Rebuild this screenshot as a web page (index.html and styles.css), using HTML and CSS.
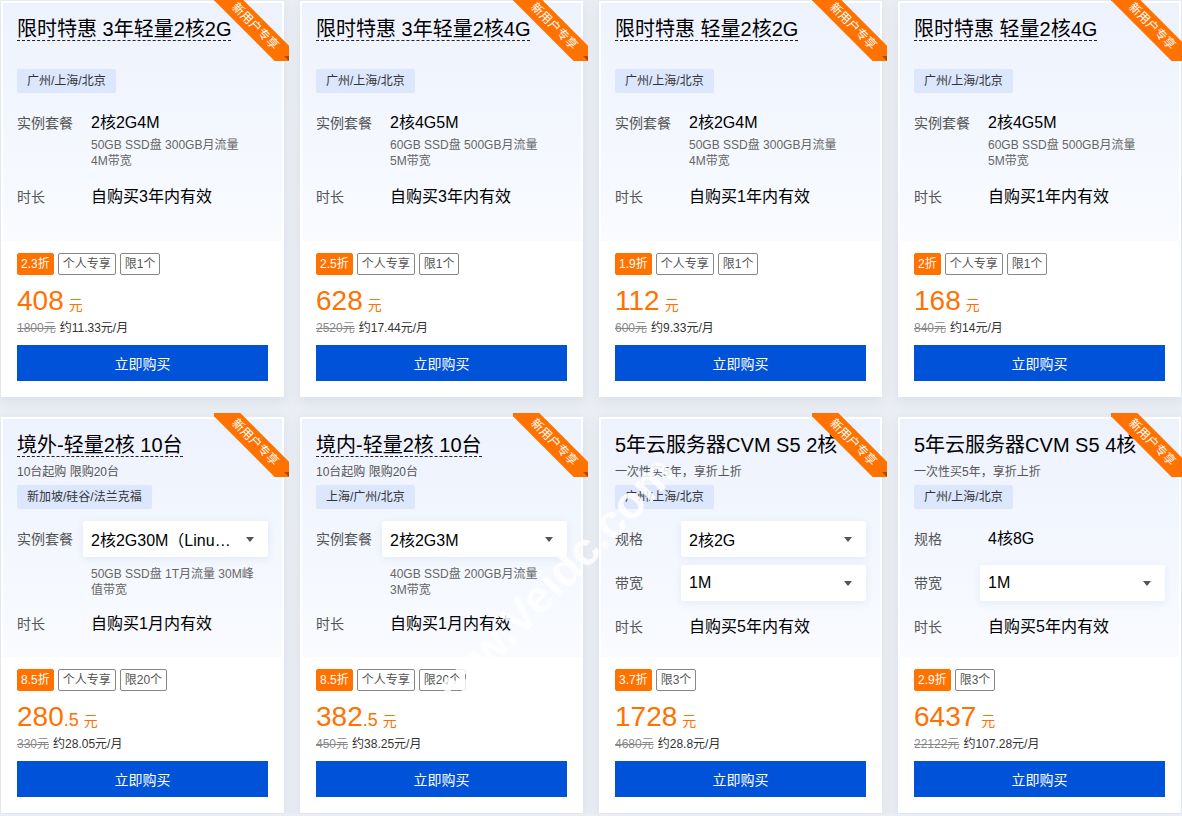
FILE: index.html
```html
<!DOCTYPE html>
<html lang="zh-CN">
<head>
    <meta charset="UTF-8">
    <meta name="viewport" content="width=device-width, initial-scale=1.0">
    <title>新用户专享</title>
    <link rel="stylesheet" href="styles.css">
</head>
<body>
    <div class="plans">

        <div class="plan">
            <div class="ribbon"><span>新用户专享</span></div>
            <div class="plan-top">
                <div class="plan-head">
                    <div class="plan-title"><span class="dashed">限时特惠 3年轻量2核2G</span></div>
                </div>
                <div class="region">广州/上海/北京</div>
                <div class="specs">
                    <div class="spec">
                        <span class="spec-label">实例套餐</span>
                        <div class="spec-value">
                            <div class="spec-text">2核2G4M</div>
                            <div class="spec-note">50GB SSD盘 300GB月流量 4M带宽</div>
                        </div>
                    </div>
                    <div class="spec">
                        <span class="spec-label">时长</span>
                        <div class="spec-value"><div class="spec-text">自购买3年内有效</div></div>
                    </div>
                </div>
            </div>
            <div class="plan-bottom">
                <div class="tags">
                    <span class="tag tag-off">2.3折</span>
                    <span class="tag">个人专享</span>
                    <span class="tag">限1个</span>
                </div>
                <div class="price">408<span class="price-unit">元</span></div>
                <div class="orig"><del>1800元</del>约11.33元/月</div>
                <button class="buy">立即购买</button>
            </div>
        </div>

        <div class="plan">
            <div class="ribbon"><span>新用户专享</span></div>
            <div class="plan-top">
                <div class="plan-head">
                    <div class="plan-title"><span class="dashed">限时特惠 3年轻量2核4G</span></div>
                </div>
                <div class="region">广州/上海/北京</div>
                <div class="specs">
                    <div class="spec">
                        <span class="spec-label">实例套餐</span>
                        <div class="spec-value">
                            <div class="spec-text">2核4G5M</div>
                            <div class="spec-note">60GB SSD盘 500GB月流量 5M带宽</div>
                        </div>
                    </div>
                    <div class="spec">
                        <span class="spec-label">时长</span>
                        <div class="spec-value"><div class="spec-text">自购买3年内有效</div></div>
                    </div>
                </div>
            </div>
            <div class="plan-bottom">
                <div class="tags">
                    <span class="tag tag-off">2.5折</span>
                    <span class="tag">个人专享</span>
                    <span class="tag">限1个</span>
                </div>
                <div class="price">628<span class="price-unit">元</span></div>
                <div class="orig"><del>2520元</del>约17.44元/月</div>
                <button class="buy">立即购买</button>
            </div>
        </div>

        <div class="plan">
            <div class="ribbon"><span>新用户专享</span></div>
            <div class="plan-top">
                <div class="plan-head">
                    <div class="plan-title"><span class="dashed">限时特惠 轻量2核2G</span></div>
                </div>
                <div class="region">广州/上海/北京</div>
                <div class="specs">
                    <div class="spec">
                        <span class="spec-label">实例套餐</span>
                        <div class="spec-value">
                            <div class="spec-text">2核2G4M</div>
                            <div class="spec-note">50GB SSD盘 300GB月流量 4M带宽</div>
                        </div>
                    </div>
                    <div class="spec">
                        <span class="spec-label">时长</span>
                        <div class="spec-value"><div class="spec-text">自购买1年内有效</div></div>
                    </div>
                </div>
            </div>
            <div class="plan-bottom">
                <div class="tags">
                    <span class="tag tag-off">1.9折</span>
                    <span class="tag">个人专享</span>
                    <span class="tag">限1个</span>
                </div>
                <div class="price">112<span class="price-unit">元</span></div>
                <div class="orig"><del>600元</del>约9.33元/月</div>
                <button class="buy">立即购买</button>
            </div>
        </div>

        <div class="plan">
            <div class="ribbon"><span>新用户专享</span></div>
            <div class="plan-top">
                <div class="plan-head">
                    <div class="plan-title"><span class="dashed">限时特惠 轻量2核4G</span></div>
                </div>
                <div class="region">广州/上海/北京</div>
                <div class="specs">
                    <div class="spec">
                        <span class="spec-label">实例套餐</span>
                        <div class="spec-value">
                            <div class="spec-text">2核4G5M</div>
                            <div class="spec-note">60GB SSD盘 500GB月流量 5M带宽</div>
                        </div>
                    </div>
                    <div class="spec">
                        <span class="spec-label">时长</span>
                        <div class="spec-value"><div class="spec-text">自购买1年内有效</div></div>
                    </div>
                </div>
            </div>
            <div class="plan-bottom">
                <div class="tags">
                    <span class="tag tag-off">2折</span>
                    <span class="tag">个人专享</span>
                    <span class="tag">限1个</span>
                </div>
                <div class="price">168<span class="price-unit">元</span></div>
                <div class="orig"><del>840元</del>约14元/月</div>
                <button class="buy">立即购买</button>
            </div>
        </div>

        <div class="plan">
            <div class="ribbon"><span>新用户专享</span></div>
            <div class="plan-top">
                <div class="plan-head">
                    <div class="plan-title"><span class="dashed">境外-轻量2核 10台</span></div>
                    <div class="plan-desc">10台起购 限购20台</div>
                </div>
                <div class="region">新加坡/硅谷/法兰克福</div>
                <div class="specs">
                    <div class="spec">
                        <span class="spec-label">实例套餐</span>
                        <div class="spec-value">
                            <div class="select"><span class="select-text">2核2G30M（Linux）</span><i class="caret"></i></div>
                            <div class="spec-note">50GB SSD盘 1T月流量 30M峰值带宽</div>
                        </div>
                    </div>
                    <div class="spec">
                        <span class="spec-label">时长</span>
                        <div class="spec-value"><div class="spec-text">自购买1月内有效</div></div>
                    </div>
                </div>
            </div>
            <div class="plan-bottom">
                <div class="tags">
                    <span class="tag tag-off">8.5折</span>
                    <span class="tag">个人专享</span>
                    <span class="tag">限20个</span>
                </div>
                <div class="price">280<span class="price-dec">.5</span><span class="price-unit">元</span></div>
                <div class="orig"><del>330元</del>约28.05元/月</div>
                <button class="buy">立即购买</button>
            </div>
        </div>

        <div class="plan">
            <div class="ribbon"><span>新用户专享</span></div>
            <div class="plan-top">
                <div class="plan-head">
                    <div class="plan-title"><span class="dashed">境内-轻量2核 10台</span></div>
                    <div class="plan-desc">10台起购 限购20台</div>
                </div>
                <div class="region">上海/广州/北京</div>
                <div class="specs">
                    <div class="spec">
                        <span class="spec-label">实例套餐</span>
                        <div class="spec-value">
                            <div class="select"><span class="select-text">2核2G3M</span><i class="caret"></i></div>
                            <div class="spec-note">40GB SSD盘 200GB月流量 3M带宽</div>
                        </div>
                    </div>
                    <div class="spec">
                        <span class="spec-label">时长</span>
                        <div class="spec-value"><div class="spec-text">自购买1月内有效</div></div>
                    </div>
                </div>
            </div>
            <div class="plan-bottom">
                <div class="tags">
                    <span class="tag tag-off">8.5折</span>
                    <span class="tag">个人专享</span>
                    <span class="tag">限20个</span>
                </div>
                <div class="price">382<span class="price-dec">.5</span><span class="price-unit">元</span></div>
                <div class="orig"><del>450元</del>约38.25元/月</div>
                <button class="buy">立即购买</button>
            </div>
        </div>

        <div class="plan">
            <div class="ribbon"><span>新用户专享</span></div>
            <div class="plan-top">
                <div class="plan-head">
                    <div class="plan-title">5年云服务器CVM S5 2核</div>
                    <div class="plan-desc">一次性买5年，享折上折</div>
                </div>
                <div class="region">广州/上海/北京</div>
                <div class="specs">
                    <div class="spec">
                        <span class="spec-label">规格</span>
                        <div class="spec-value">
                            <div class="select"><span class="select-text">2核2G</span><i class="caret"></i></div>
                        </div>
                    </div>
                    <div class="spec">
                        <span class="spec-label">带宽</span>
                        <div class="spec-value">
                            <div class="select"><span class="select-text">1M</span><i class="caret"></i></div>
                        </div>
                    </div>
                    <div class="spec">
                        <span class="spec-label">时长</span>
                        <div class="spec-value"><div class="spec-text">自购买5年内有效</div></div>
                    </div>
                </div>
            </div>
            <div class="plan-bottom">
                <div class="tags">
                    <span class="tag tag-off">3.7折</span>
                    <span class="tag">限3个</span>
                </div>
                <div class="price">1728<span class="price-unit">元</span></div>
                <div class="orig"><del>4680元</del>约28.8元/月</div>
                <button class="buy">立即购买</button>
            </div>
        </div>

        <div class="plan">
            <div class="ribbon"><span>新用户专享</span></div>
            <div class="plan-top">
                <div class="plan-head">
                    <div class="plan-title">5年云服务器CVM S5 4核</div>
                    <div class="plan-desc">一次性买5年，享折上折</div>
                </div>
                <div class="region">广州/上海/北京</div>
                <div class="specs">
                    <div class="spec">
                        <span class="spec-label">规格</span>
                        <div class="spec-value"><div class="spec-text">4核8G</div></div>
                    </div>
                    <div class="spec">
                        <span class="spec-label">带宽</span>
                        <div class="spec-value">
                            <div class="select"><span class="select-text">1M</span><i class="caret"></i></div>
                        </div>
                    </div>
                    <div class="spec">
                        <span class="spec-label">时长</span>
                        <div class="spec-value"><div class="spec-text">自购买5年内有效</div></div>
                    </div>
                </div>
            </div>
            <div class="plan-bottom">
                <div class="tags">
                    <span class="tag tag-off">2.9折</span>
                    <span class="tag">限3个</span>
                </div>
                <div class="price">6437<span class="price-unit">元</span></div>
                <div class="orig"><del>22122元</del>约107.28元/月</div>
                <button class="buy">立即购买</button>
            </div>
        </div>

        <div class="watermark">www.Veidc.com</div>
    </div>
</body>
</html>
```

FILE: styles.css
```css
* {
    box-sizing: border-box;
    margin: 0;
    padding: 0;
}

body {
    background-color: #eaedf3;
    font-family: "Liberation Sans", "Noto Sans CJK SC", sans-serif;
    color: #000;
}

.plans {
    position: relative;
    display: grid;
    grid-template-columns: repeat(4, 283px);
    gap: 20px 16px;
    padding: 1px;
}

.plan {
    position: relative;
    background-color: #fff;
    padding: 2px;
    box-shadow: 0 4px 12px rgba(40, 70, 130, 0.08);
}

/* corner ribbon */
.ribbon {
    position: absolute;
    top: -4px;
    right: -5px;
    width: 75px;
    height: 64px;
    overflow: hidden;
    z-index: 2;
}

.ribbon span {
    position: absolute;
    left: -11px;
    top: 19px;
    width: 104px;
    height: 21px;
    line-height: 21px;
    text-align: center;
    background-color: #ff7200;
    color: #fff;
    font-size: 12px;
    transform: rotate(45deg);
}

.ribbon::before {
    content: "";
    position: absolute;
    left: 0;
    top: 0;
    border-left: 4px solid #a94a00;
    border-top: 4px solid transparent;
}

.ribbon::after {
    content: "";
    position: absolute;
    right: 0;
    bottom: 0;
    border-top: 5px solid #a94a00;
    border-left: 5px solid transparent;
}

.plan-top {
    height: 238px;
    padding: 14px 14px 0;
    background: linear-gradient(180deg, #edf2fd 0%, #f9fbff 100%);
}

.plan-head {
    height: 47px;
}

.plan-title {
    font-size: 20px;
    line-height: 24px;
    white-space: nowrap;
}

.plan-title .dashed {
    border-bottom: 1px dashed #222;
}

.plan-desc {
    margin-top: 6px;
    font-size: 12px;
    line-height: 18px;
    color: #555;
}

.region {
    display: inline-block;
    margin-top: 5px;
    height: 24px;
    line-height: 24px;
    padding: 0 10px;
    background-color: #dce7fd;
    border-radius: 2px;
    font-size: 12px;
    color: #333;
}

.specs {
    margin-top: 12px;
    display: flex;
    flex-direction: column;
    gap: 8px;
}

.spec {
    display: flex;
    align-items: flex-start;
}

.spec-label {
    width: 66px;
    flex: none;
    font-size: 14px;
    line-height: 36px;
    color: #555;
}

.spec-value {
    flex: 1;
    min-width: 0;
}

.spec-text {
    padding-left: 8px;
    font-size: 16px;
    line-height: 36px;
}

.spec-note {
    width: 173px;
    padding-left: 8px;
    margin: -4px 0 2px;
    font-size: 12px;
    line-height: 16px;
    color: #666;
}

.select {
    display: flex;
    align-items: center;
    height: 36px;
    padding: 0 14px 0 8px;
    background-color: #fff;
    border-radius: 2px;
    box-shadow: 0 2px 8px rgba(30, 70, 150, 0.08);
    font-size: 16px;
}

.select + .spec-note {
    margin: 9px 0 0;
}

.select-text {
    flex: 1;
    overflow: hidden;
    white-space: nowrap;
    text-overflow: ellipsis;
}

.caret {
    width: 0;
    height: 0;
    margin-left: 8px;
    border-left: 4px solid transparent;
    border-right: 4px solid transparent;
    border-top: 5px solid #555;
}

.plan-bottom {
    padding: 12px 14px 14px;
}

.tags {
    display: flex;
    gap: 4px;
}

.tag {
    height: 22px;
    line-height: 20px;
    padding: 0 4px;
    border: 1px solid #888;
    border-radius: 2px;
    font-size: 12px;
    color: #555;
}

.tag-off {
    padding: 0 3px;
    background-color: #ff7200;
    border-color: #ff7200;
    color: #fff;
}

.price {
    height: 36px;
    margin-top: 8px;
    color: #ff7200;
    font-size: 28px;
    line-height: 36px;
}

.price-dec {
    font-size: 18px;
    line-height: 1;
}

.price-unit {
    margin-left: 5px;
    font-size: 14px;
    line-height: 1;
}

.orig {
    height: 18px;
    font-size: 12px;
    line-height: 18px;
    color: #333;
}

.orig del {
    color: #888;
    margin-right: 4px;
}

.buy {
    display: block;
    width: 100%;
    height: 36px;
    margin-top: 8px;
    border: none;
    background-color: #0052d9;
    color: #fff;
    font-size: 14px;
    font-family: inherit;
    cursor: pointer;
}

.buy:hover {
    background-color: #0046bb;
}

.watermark {
    position: absolute;
    left: 374px;
    top: 560px;
    width: 340px;
    text-align: center;
    font-size: 46px;
    font-weight: bold;
    line-height: 60px;
    color: rgba(255, 255, 255, 0.85);
    transform: rotate(-46deg);
    pointer-events: none;
    z-index: 3;
}
```
